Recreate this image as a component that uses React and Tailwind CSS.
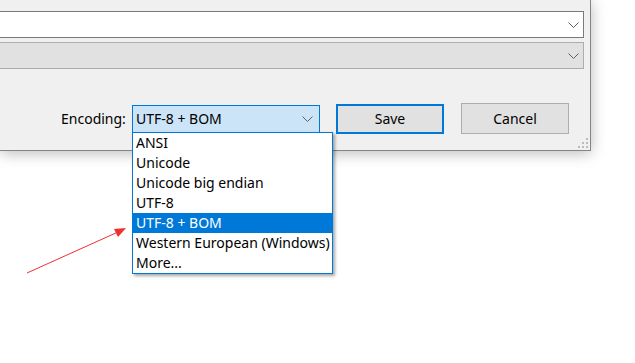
import React from 'react';

const Chevron = ({ className = '' }) => (
  <svg width="11" height="6" viewBox="0 0 11 6" className={className}>
    <path d="M0.5 0.5 L5.5 5.5 L10.5 0.5" fill="none" stroke="#606060" strokeWidth="1" />
  </svg>
);

const options = ['ANSI', 'Unicode', 'Unicode big endian', 'UTF-8', 'UTF-8 + BOM', 'Western European (Windows)', 'More...'];

export default function App() {
  return (
    <div className="relative w-[635px] h-[363px] bg-white overflow-hidden text-[14px] text-black font-['Segoe_UI','Noto_Sans',sans-serif]">
      {/* save dialog, only its bottom-right part is visible */}
      <div className="relative w-[591px] h-[151px] bg-[#f0f0f0] border-r border-b border-[#858585] shadow-[0_2px_14px_rgba(0,0,0,0.28)] pt-[11px] pr-[6px] flex flex-col">
        <div className="h-[27px] bg-white border border-l-0 border-[#7a7a7a] flex items-center justify-end pr-[4px]">
          <Chevron />
        </div>
        <div className="mt-[4px] h-[27px] bg-[#e1e1e1] border border-l-0 border-[#adadad] flex items-center justify-end pr-[4px]">
          <Chevron />
        </div>

        <div className="mt-[34px] h-[31px] flex items-center">
          <span className="ml-[61px] w-[71px] leading-none whitespace-nowrap">Encoding:</span>
          <div className="w-[188px] h-[28px] bg-[#cce4f7] border border-[#0078d7] flex items-center justify-between pl-[3px] pr-[6px]">
            <span className="leading-none">UTF-8 + BOM</span>
            <Chevron />
          </div>
          <button className="ml-[16px] w-[108px] h-[30px] bg-[#e1e1e1] border-2 border-[#0078d7] leading-none">Save</button>
          <button className="ml-[17px] w-[108px] h-[31px] bg-[#e1e1e1] border border-[#adadad] leading-none">Cancel</button>
        </div>

        {/* resize grip */}
        <div className="absolute right-[2px] bottom-[2px] grid grid-cols-3 gap-[2px]">
          <span className="w-[2px] h-[2px]" />
          <span className="w-[2px] h-[2px]" />
          <span className="w-[2px] h-[2px] bg-[#bcbcbc]" />
          <span className="w-[2px] h-[2px]" />
          <span className="w-[2px] h-[2px] bg-[#bcbcbc]" />
          <span className="w-[2px] h-[2px] bg-[#bcbcbc]" />
          <span className="w-[2px] h-[2px] bg-[#bcbcbc]" />
          <span className="w-[2px] h-[2px] bg-[#bcbcbc]" />
          <span className="w-[2px] h-[2px] bg-[#bcbcbc]" />
        </div>
      </div>

      {/* open encoding list */}
      <ul className="absolute left-[132px] top-[132px] w-[201px] bg-white border border-[#0078d7] shadow-[2px_2px_3px_rgba(0,0,0,0.35)]">
        {options.map((o) => (
          <li
            key={o}
            className={
              o === 'UTF-8 + BOM'
                ? 'h-[20px] pl-[3px] flex items-center bg-[#0078d7] text-white leading-none whitespace-nowrap'
                : 'h-[20px] pl-[3px] flex items-center leading-none whitespace-nowrap'
            }
          >
            {o}
          </li>
        ))}
      </ul>

      {/* red annotation arrow */}
      <svg className="absolute left-0 top-0" width="635" height="363">
        <line x1="27" y1="273" x2="118" y2="232" stroke="#f03030" strokeWidth="1" />
        <polygon points="126,228 114,229 118,237" fill="#f03030" />
      </svg>
    </div>
  );
}
